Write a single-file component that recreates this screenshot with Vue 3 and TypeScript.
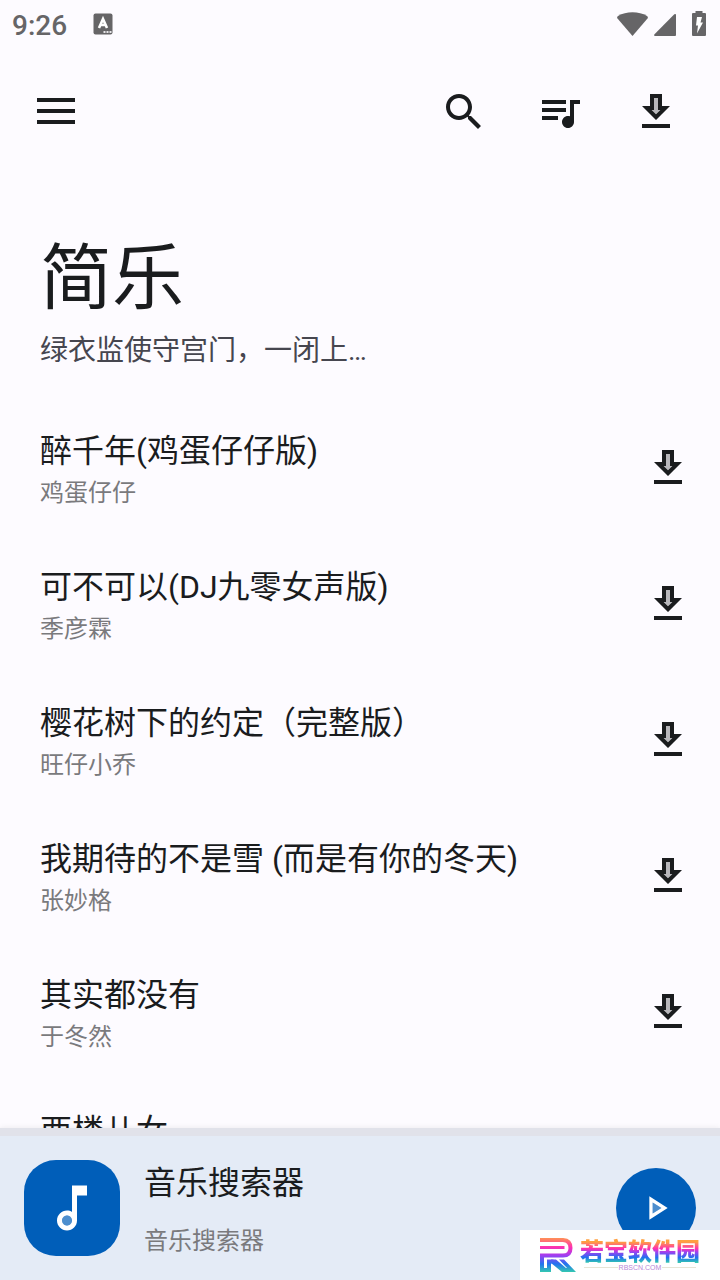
<script setup lang="ts">
interface Song {
  title: string
  artist: string
}

const songs: Song[] = [
  { title: '醉千年(鸡蛋仔仔版)', artist: '鸡蛋仔仔' },
  { title: '可不可以(DJ九零女声版)', artist: '季彦霖' },
  { title: '樱花树下的约定（完整版）', artist: '旺仔小乔' },
  { title: '我期待的不是雪 (而是有你的冬天)', artist: '张妙格' },
  { title: '其实都没有', artist: '于冬然' },
  { title: '西楼儿女', artist: '' },
]
</script>

<template>
  <div class="app">
    <div class="status">
      <span class="clock">9:26</span>
      <svg class="ime" width="20" height="22" viewBox="0 0 20 22" aria-hidden="true">
        <rect x="0.5" y="0.5" width="19" height="21" rx="2" fill="#666567" />
        <path d="M6 15 10 6l4 9M7.500 12h5" fill="none" stroke="#fff" stroke-width="2.600" />
        <path d="M10.500 18h2v2h-2zM13.500 18h2v2h-2zM16.500 18h2v2h-2z" fill="#e6e5e8" />
      </svg>
      <span class="spacer"></span>
      <svg width="32" height="26" viewBox="0 0 32 26" aria-hidden="true">
        <path d="M16.500 25 1.500 7.500Q.5 6 2 5C10 0 23 0 31 5Q32.500 6 31.500 7.500Z" fill="#666567" />
      </svg>
      <svg class="signal" width="22" height="26" viewBox="0 0 22 26" aria-hidden="true">
        <path d="M1 25Q-.5 24.500.5 23.300L20.300 3.300Q22 2.200 22 4V24Q22 25 21 25Z" fill="#666567" />
      </svg>
      <svg class="battery" width="14" height="26" viewBox="0 0 14 26" aria-hidden="true">
        <path d="M3.500 0h7v2H13q1 0 1 1v21q0 1-1 1H1q-1 0-1-1V3q0-1 1-1h2.500z" fill="#666567" />
        <path d="M5 6h5L8.500 11.500H11L5 22.500 6 14.500H4z" fill="#fff" />
      </svg>
    </div>

    <header class="bar">
      <button class="icon" aria-label="菜单">
        <svg viewBox="0 0 48 48"><path d="M5 10h38v4H5zM5 21h38v4H5zM5 32h38v4H5z" /></svg>
      </button>
      <span class="spacer"></span>
      <button class="icon" aria-label="搜索">
        <svg viewBox="0 0 24 24"><path d="M15.500 14h-.79l-.28-.27C15.410 12.590 16 11.110 16 9.500 16 5.910 13.090 3 9.500 3S3 5.910 3 9.500 5.910 16 9.500 16c1.610 0 3.090-.59 4.230-1.570l.27.28v.79l5 4.990L20.490 19l-4.990-5zm-6 0C7.010 14 5 11.990 5 9.500S7.010 5 9.500 5 14 7.010 14 9.500 11.990 14 9.500 14z" /></svg>
      </button>
      <button class="icon" aria-label="播放列表">
        <svg viewBox="0 0 24 24"><path d="M15 6H3v2h12V6zm0 4H3v2h12v-2zM3 16h8v-2H3v2zM17 6v8.180c-.31-.11-.65-.18-1-.18-1.660 0-3 1.340-3 3s1.340 3 3 3 3-1.340 3-3V8h3V6h-5z" /></svg>
      </button>
      <button class="icon" aria-label="下载">
        <svg viewBox="0 0 24 24">
          <path opacity=".3" d="M9.830 11H11V5h2v6h1.170L12 13.170z" />
          <path d="M19 9h-4V3H9v6H5l7 7 7-7zm-8 2V5h2v6h1.170L12 13.170 9.830 11H11zm-6 7h14v2H5z" />
        </svg>
      </button>
    </header>

    <main class="content">
      <section class="intro">
        <h1>简乐</h1>
        <p>绿衣监使守宫门，一闭上…</p>
      </section>
      <ul class="songs">
        <li v-for="song in songs" :key="song.title" class="song">
          <div class="meta">
            <span class="title">{{ song.title }}</span>
            <span class="artist">{{ song.artist }}</span>
          </div>
          <button class="icon" :aria-label="'下载 ' + song.title">
            <svg viewBox="0 0 24 24">
              <path opacity=".3" d="M9.830 11H11V5h2v6h1.170L12 13.170z" />
              <path d="M19 9h-4V3H9v6H5l7 7 7-7zm-8 2V5h2v6h1.170L12 13.170 9.830 11H11zm-6 7h14v2H5z" />
            </svg>
          </button>
        </li>
      </ul>
    </main>

    <footer class="player">
      <div class="track"></div>
      <div class="now">
        <div class="cover">
          <svg width="60" height="60" viewBox="0 0 24 24" fill="#fff" aria-hidden="true">
            <circle cx="10" cy="17" r="2" opacity=".3" />
            <path d="M12 3l.01 10.550c-.59-.34-1.270-.55-2-.55C7.790 13 6 14.790 6 17s1.790 4 4.010 4S14 19.210 14 17V7h4V3h-6zm-1.990 16c-1.100 0-2-.9-2-2s.9-2 2-2 2 .9 2 2-.9 2-2 2z" />
          </svg>
        </div>
        <div class="meta">
          <span class="title">音乐搜索器</span>
          <span class="artist">音乐搜索器</span>
        </div>
        <button class="play" aria-label="播放">
          <svg width="40" height="40" viewBox="0 0 24 24" fill="#fff">
            <path opacity=".3" d="M10 8.640v6.720L15.270 12z" />
            <path d="M8 19l11-7L8 5v14zm2-10.360L15.270 12 10 15.360V8.640z" />
          </svg>
        </button>
      </div>
    </footer>

    <aside class="mark">
      <svg width="38" height="36" viewBox="0 0 38 36" aria-hidden="true">
        <defs>
          <linearGradient id="rainbow" x1="0" y1="0" x2="0" y2="36" gradientUnits="userSpaceOnUse">
            <stop offset="0" stop-color="#ff9d4a" />
            <stop offset=".28" stop-color="#ff2fb0" />
            <stop offset=".5" stop-color="#a63cf0" />
            <stop offset=".75" stop-color="#2272f0" />
            <stop offset="1" stop-color="#35d3a8" />
          </linearGradient>
        </defs>
        <g fill="none" stroke="url(#rainbow)" stroke-width="4">
          <path d="M1 3H24Q31.500 3.500 31.500 11T24 18.500H3V33H10V24.500H14.500" />
          <path d="M1 10.500H25.500" stroke-width="3" />
        </g>
        <path d="M12 22.500h5L27 31h1L20 22.500h5L37 35H23L12 26z" fill="url(#rainbow)" />
      </svg>
      <div class="brand">
        <strong>若宝软件园</strong>
        <small>RBSCN.COM</small>
      </div>
    </aside>
  </div>
</template>

<style>
body {
  margin: 0;
}
</style>

<style scoped>
.app {
  position: relative;
  display: flex;
  flex-direction: column;
  height: 100vh;
  overflow: hidden;
  background: #fdfbff;
  color: #1a1c1e;
  font-family: Roboto, "Noto Sans CJK SC", sans-serif;
}
.status {
  display: flex;
  align-items: center;
  height: 48px;
  padding: 0 14px 0 12px;
  flex: none;
  box-sizing: border-box;
}
.clock {
  padding-top: 4px;
  font-size: 28px;
  font-weight: 500;
  line-height: 44px;
  color: #666567;
}
.ime {
  margin-left: 26px;
}
.signal {
  margin-left: 6px;
}
.battery {
  margin-left: 16px;
}
.status svg {
  flex: none;
}
.spacer {
  flex: 1;
}
.bar {
  display: flex;
  align-items: center;
  flex: none;
  height: 128px;
  gap: 48px;
  padding: 0 40px 0 32px;
}
button {
  border: 0;
  padding: 0;
  background: none;
  color: inherit;
  cursor: pointer;
}
.icon {
  width: 48px;
  height: 48px;
  flex: none;
}
.icon svg {
  display: block;
  width: 48px;
  height: 48px;
  fill: currentColor;
}
.content {
  flex: 1;
  min-height: 0;
  overflow: hidden;
}
.intro {
  padding: 52px 40px 28px;
}
h1 {
  margin: 0;
  font-size: 72px;
  font-weight: 400;
  line-height: 102px;
}
.intro p {
  margin: 0;
  font-size: 28px;
  line-height: 42px;
  color: #46464f;
}
.songs {
  margin: 0;
  padding: 0;
  list-style: none;
}
.song {
  display: flex;
  align-items: center;
  height: 136px;
  padding: 0 28px 0 40px;
}
.meta {
  flex: 1;
  min-width: 0;
  display: flex;
  flex-direction: column;
  padding-top: 2px;
}
.title {
  font-size: 32px;
  line-height: 48px;
  white-space: nowrap;
}
.artist {
  min-height: 36px;
  font-size: 24px;
  line-height: 36px;
  color: #7a7a7d;
}
.player {
  flex: none;
  background: #e4ebf6;
  box-shadow: 0 0 6px rgba(0, 0, 0, 0.08);
}
.track {
  height: 8px;
  background: #e1e2ea;
}
.now {
  display: flex;
  align-items: center;
  height: 144px;
  padding: 0 24px;
  gap: 24px;
}
.now .meta {
  gap: 16px;
}
.cover {
  display: grid;
  place-items: center;
  width: 96px;
  height: 96px;
  border-radius: 32px;
  background: #005eb9;
}
.play {
  display: grid;
  place-items: center;
  width: 80px;
  height: 80px;
  border-radius: 50%;
  background: #005eb9;
}
.mark {
  position: absolute;
  right: 0;
  bottom: 0;
  display: flex;
  align-items: center;
  gap: 3px;
  width: 200px;
  height: 50px;
  padding-left: 19px;
  box-sizing: border-box;
  background: #fff;
}
.brand {
  display: flex;
  flex-direction: column;
  padding-bottom: 3px;
}
.brand strong {
  font-size: 24px;
  font-weight: 900;
  line-height: 28px;
  color: transparent;
  background: linear-gradient(#ffa040 14%, #ff2fb0 38%, #a040f0 50%, #2070f0 70%, #35d3a8 90%);
  background-clip: text;
  -webkit-background-clip: text;
}
.brand small {
  display: flex;
  align-items: center;
  gap: 1px;
  padding: 0 4px;
  font-family: "Liberation Sans", sans-serif;
  font-size: 7px;
  line-height: 4px;
  color: #b889d8;
}
.brand small::before,
.brand small::after {
  content: "";
  flex: 1;
  height: 1px;
  background: #e6e4d6;
}
</style>
